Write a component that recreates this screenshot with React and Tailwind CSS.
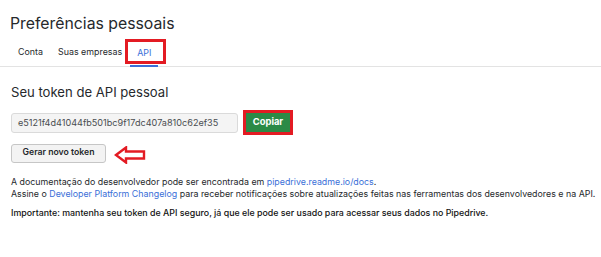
import React from 'react'

const Arrow = () => (
  <svg width="32" height="18" viewBox="0 0 32 18" className="ml-[8px] mt-[4px]">
    <path d="M2 9 L12 1.5 L12 5.5 L30 5.5 L30 12.5 L12 12.5 L12 16.5 Z" fill="none" stroke="#e31b23" strokeWidth="2.4" />
  </svg>
)

const App = () => {
  return (
    <div className="w-[601px] h-[257px] bg-white text-[#26292c]" style={{ fontFamily: 'Inter, "Liberation Sans", sans-serif' }}>
      <h1 className="pl-[10px] pt-[14px] text-[15.8px] leading-[20px] text-[#26292c]">Preferências pessoais</h1>

      <div className="flex items-end h-[33px] border-b border-[#e3e3e3] pl-[11px] text-[8.9px] text-[#26292c]">
        <div className="h-[27px] px-[7px] flex items-center border-b-2 border-transparent">Conta</div>
        <div className="h-[27px] px-[7px] ml-[1px] flex items-center border-b-2 border-transparent">Suas empresas</div>
        <div className="relative h-[27px] px-[7px] ml-[1px] flex items-center border-b-2 border-[#3a6fd8] text-[#3a6fd8] mb-[-1px]">
          API
          <div className="absolute left-[-5px] right-[-8px] top-[-1px] bottom-[1px] border-[3px] border-[#e31b23]"></div>
        </div>
      </div>

      <div className="pl-[11px] pt-[17px]">
        <h2 className="text-[13.1px] leading-[16px] text-[#26292c]">Seu token de API pessoal</h2>

        <div className="flex items-center mt-[10px]">
          <div className="w-[227px] h-[20px] rounded-[3px] border border-[#dadada] bg-[#f4f4f4] pl-[6px] flex items-center text-[9.1px] text-[#4a4d50]">
            e5121f4d41044fb501bc9f17dc407a810c62ef35
          </div>
          <div className="ml-[5px] border-[3px] border-[#e31b23]">
            <button className="h-[19px] w-[44px] flex items-center justify-center bg-[#2b8a46] text-white text-[9.4px] font-bold">Copiar</button>
          </div>
        </div>

        <div className="flex items-center mt-[7px]">
          <button className="h-[19px] w-[95px] rounded-[3px] border border-[#c6c6c6] bg-[#f3f3f3] text-[8.7px] font-semibold text-[#26292c]">
            Gerar novo token
          </button>
          <Arrow />
        </div>

        <div className="mt-[12px] text-[8.85px] leading-[12px] text-[#26292c]">
          <p>A documentação do desenvolvedor pode ser encontrada em <span className="text-[#3a6fd8]">pipedrive.readme.io/docs</span>.</p>
          <p>Assine o <span className="text-[#3a6fd8]">Developer Platform Changelog</span> para receber notificações sobre atualizações feitas nas ferramentas dos desenvolvedores e na API.</p>
          <p className="mt-[7px] font-medium text-[#111]">Importante: mantenha seu token de API seguro, já que ele pode ser usado para acessar seus dados no Pipedrive.</p>
        </div>
      </div>
    </div>
  )
}

export default App
